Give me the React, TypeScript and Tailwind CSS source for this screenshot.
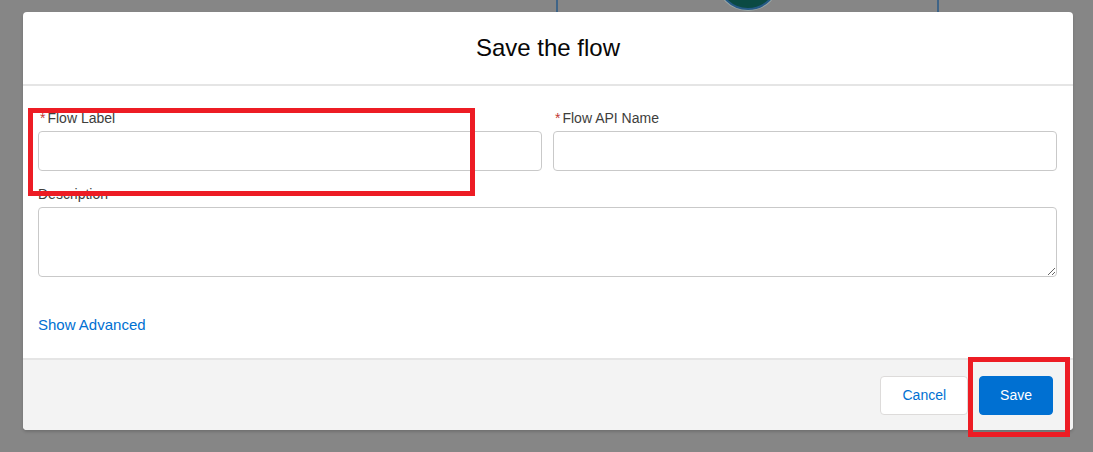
import React from "react";

const Required: React.FC = () => (
  <abbr className="mx-[2px] text-[#c23934] no-underline" title="required">
    *
  </abbr>
);

const App: React.FC = () => {
  return (
    <div className="relative h-[452px] w-full overflow-hidden bg-[#868686] font-['Liberation_Sans',Arial,sans-serif]">
      {/* canvas behind the overlay */}
      <div className="absolute left-[556px] top-[-40px] h-[80px] w-[383px] border-x-2 border-[#3f6487]" />
      <div className="absolute left-[717px] top-[-52px] h-[62px] w-[62px] rounded-full border-2 border-[#255a86] bg-[#0b4a43] ring-1 ring-[#9aa7a5]" />

      <div className="absolute left-[23px] top-[12px] flex h-[418px] w-[1050px] flex-col overflow-hidden rounded-[4px] bg-white shadow-[0_2px_3px_rgba(0,0,0,0.16)]">
        <header className="box-content flex h-[72px] items-center justify-center border-b-2 border-[#e5e5e5]">
          <h2 className="text-[24px] font-normal leading-none text-[#080707]">Save the flow</h2>
        </header>

        <div className="flex-1 pl-[15px] pr-[16px] pt-[23px]">
          <div className="grid grid-cols-2 gap-[11px]">
            <div className="flex flex-col">
              <label className="h-[18px] text-[14px] leading-[18px] text-[#3e3e3c]">
                <Required />
                Flow Label
              </label>
              <input className="mt-[4px] h-[40px] rounded-[4px] border border-[#c9c9c9] bg-white px-3 outline-none" />
            </div>
            <div className="flex flex-col">
              <label className="h-[18px] text-[14px] leading-[18px] text-[#3e3e3c]">
                <Required />
                Flow API Name
              </label>
              <input className="mt-[4px] h-[40px] rounded-[4px] border border-[#c9c9c9] bg-white px-3 outline-none" />
            </div>
          </div>
          <div className="mt-[14px] flex flex-col">
            <label className="h-[18px] text-[14px] leading-[18px] text-[#3e3e3c]">Description</label>
            <textarea className="mt-[4px] h-[70px] rounded-[4px] border border-[#c9c9c9] bg-white px-3 py-2 outline-none" />
          </div>
          <a className="mt-[38px] block w-fit text-[15px] leading-[20px] text-[#0070d2]" href="#">
            Show Advanced
          </a>
        </div>

        <footer className="box-content flex h-[70px] shrink-0 items-center justify-end gap-[11px] border-t-2 border-[#e5e5e5] bg-[#f3f3f3] pr-[20px]">
          <button className="h-[39px] rounded-[4px] border border-[#dddbda] bg-white px-[21px] text-[14px] text-[#0070d2]">
            Cancel
          </button>
          <button className="h-[39px] rounded-[4px] border border-[#0070d2] bg-[#0070d2] px-5 text-[14px] text-white">
            Save
          </button>
        </footer>
      </div>

      {/* annotation boxes */}
      <div className="pointer-events-none absolute left-[28px] top-[108px] h-[88px] w-[447px] border-[5px] border-[#ed1c24]" />
      <div className="pointer-events-none absolute left-[968px] top-[357px] h-[80px] w-[102px] border-[5px] border-[#ed1c24]" />
    </div>
  );
};

export default App;
